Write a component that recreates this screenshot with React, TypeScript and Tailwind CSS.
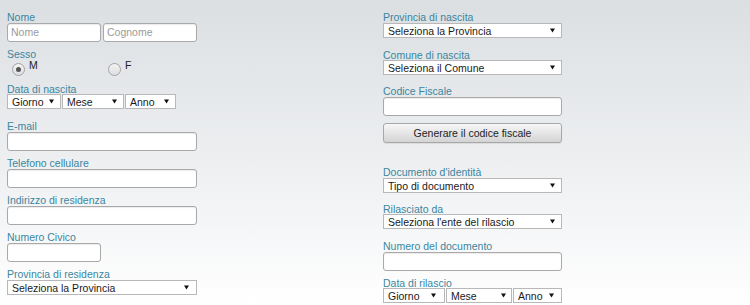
import React from "react";

const font = { fontFamily: '"Liberation Sans", Arial, sans-serif' };

function Label({ children, mt = "", h = "h-[12px]" }: { children: React.ReactNode; mt?: string; h?: string }) {
  return (
    <div className={`${h} text-[10.5px] leading-[12px] text-[#3a86a0] whitespace-nowrap ${mt}`}>{children}</div>
  );
}

function Input({ w = "w-[190px]", placeholder }: { w?: string; placeholder?: string }) {
  return (
    <div
      className={`${w} h-[19px] bg-white border border-[#a9a9a9] rounded-[3px] pl-[3px] text-[10.5px] leading-[17px] text-[#9a9a9a] shadow-[inset_0_1px_1px_rgba(0,0,0,0.08)] whitespace-nowrap`}
    >
      {placeholder}
    </div>
  );
}

function Arrow() {
  return (
    <svg width="5" height="5" viewBox="0 0 5 5" className="shrink-0">
      <path d="M0 0.5H5L2.5 4.5Z" fill="#111" />
    </svg>
  );
}

function Select({ w, text, pr = "pr-[6px]" }: { w: string; text: string; pr?: string }) {
  return (
    <div
      className={`${w} h-[15px] bg-white border border-[#b8b8b8] flex items-center justify-between pl-[4px] ${pr} text-[10.5px] leading-[12px] text-[#1a1a1a] whitespace-nowrap overflow-hidden`}
    >
      <span>{text}</span>
      <Arrow />
    </div>
  );
}

function Radio({ checked }: { checked?: boolean }) {
  return (
    <div className="w-[13px] h-[13px] rounded-full border border-[#a3a3a3] bg-gradient-to-b from-[#f4f4f4] to-[#dedede] flex items-center justify-center shrink-0">
      {checked && <div className="w-[5px] h-[5px] rounded-full bg-[#555]" />}
    </div>
  );
}

export default function App() {
  return (
    <div style={font} className="w-[750px] h-[305px] overflow-hidden bg-gradient-to-b from-[#dcdfe2] via-[#eceef0] to-white flex">
      {/* Left column */}
      <div className="ml-[7px] w-[190px] flex flex-col pt-[11px]">
        <Label>Nome</Label>
        <div className="flex gap-[2px]">
          <Input w="w-[94px]" placeholder="Nome" />
          <Input w="w-[94px]" placeholder="Cognome" />
        </div>
        <Label mt="mt-[6px]">Sesso</Label>
        <div className="h-[23px] flex items-start">
          <div className="w-[101px] flex items-start">
            <div className="ml-[5px] mt-[3px]"><Radio checked /></div>
            <span className="ml-[4px] text-[10.5px] leading-[11px] text-[#222]">M</span>
          </div>
          <div className="mt-[3px]"><Radio /></div>
          <span className="ml-[4px] text-[10.5px] leading-[11px] text-[#222]">F</span>
        </div>
        <Label h="h-[11px]">Data di nascita</Label>
        <div className="flex gap-[1px]">
          <Select w="w-[54px]" text="Giorno" pr="pr-[6px]" />
          <Select w="w-[62px]" text="Mese" pr="pr-[6px]" />
          <Select w="w-[51px]" text="Anno" pr="pr-[6px]" />
        </div>
        <Label mt="mt-[11px]">E-mail</Label>
        <Input />
        <Label mt="mt-[6px]">Telefono cellulare</Label>
        <Input />
        <Label mt="mt-[6px]">Indirizzo di residenza</Label>
        <Input />
        <Label mt="mt-[6px]">Numero Civico</Label>
        <Input w="w-[94px]" />
        <Label mt="mt-[6px]">Provincia di residenza</Label>
        <Select w="w-[190px]" text="Seleziona la Provincia" pr="pr-[7px]" />
      </div>

      {/* Right column */}
      <div className="ml-[186px] w-[179px] flex flex-col pt-[11px]">
        <Label>Provincia di nascita</Label>
        <Select w="w-[179px]" text="Seleziona la Provincia" />
        <Label mt="mt-[11px]" h="h-[11px]">Comune di nascita</Label>
        <Select w="w-[179px]" text="Seleziona il Comune" />
        <Label mt="mt-[10px]">Codice Fiscale</Label>
        <Input w="w-[179px]" />
        <button className="mt-[7px] w-[179px] h-[20px] rounded-[3px] border border-[#a8a8a8] bg-gradient-to-b from-[#f7f7f7] to-[#d4d4d4] text-[10.5px] leading-[18px] text-[#222] text-center shadow-[0_1px_1px_rgba(0,0,0,0.08)]">
          Generare il codice fiscale
        </button>
        <Label mt="mt-[23px]" h="h-[12px]">Documento d'identità</Label>
        <Select w="w-[179px]" text="Tipo di documento" />
        <Label mt="mt-[10px]" h="h-[11px]">Rilasciato da</Label>
        <Select w="w-[179px]" text="Seleziona l'ente del rilascio" />
        <Label mt="mt-[11px]">Numero del documento</Label>
        <Input w="w-[179px]" />
        <Label mt="mt-[6px]" h="h-[11px]">Data di rilascio</Label>
        <div className="flex gap-[1px]">
          <Select w="w-[62px]" text="Giorno" pr="pr-[8px]" />
          <Select w="w-[66px]" text="Mese" pr="pr-[5px]" />
          <Select w="w-[49px]" text="Anno" pr="pr-[7px]" />
        </div>
      </div>
    </div>
  );
}
